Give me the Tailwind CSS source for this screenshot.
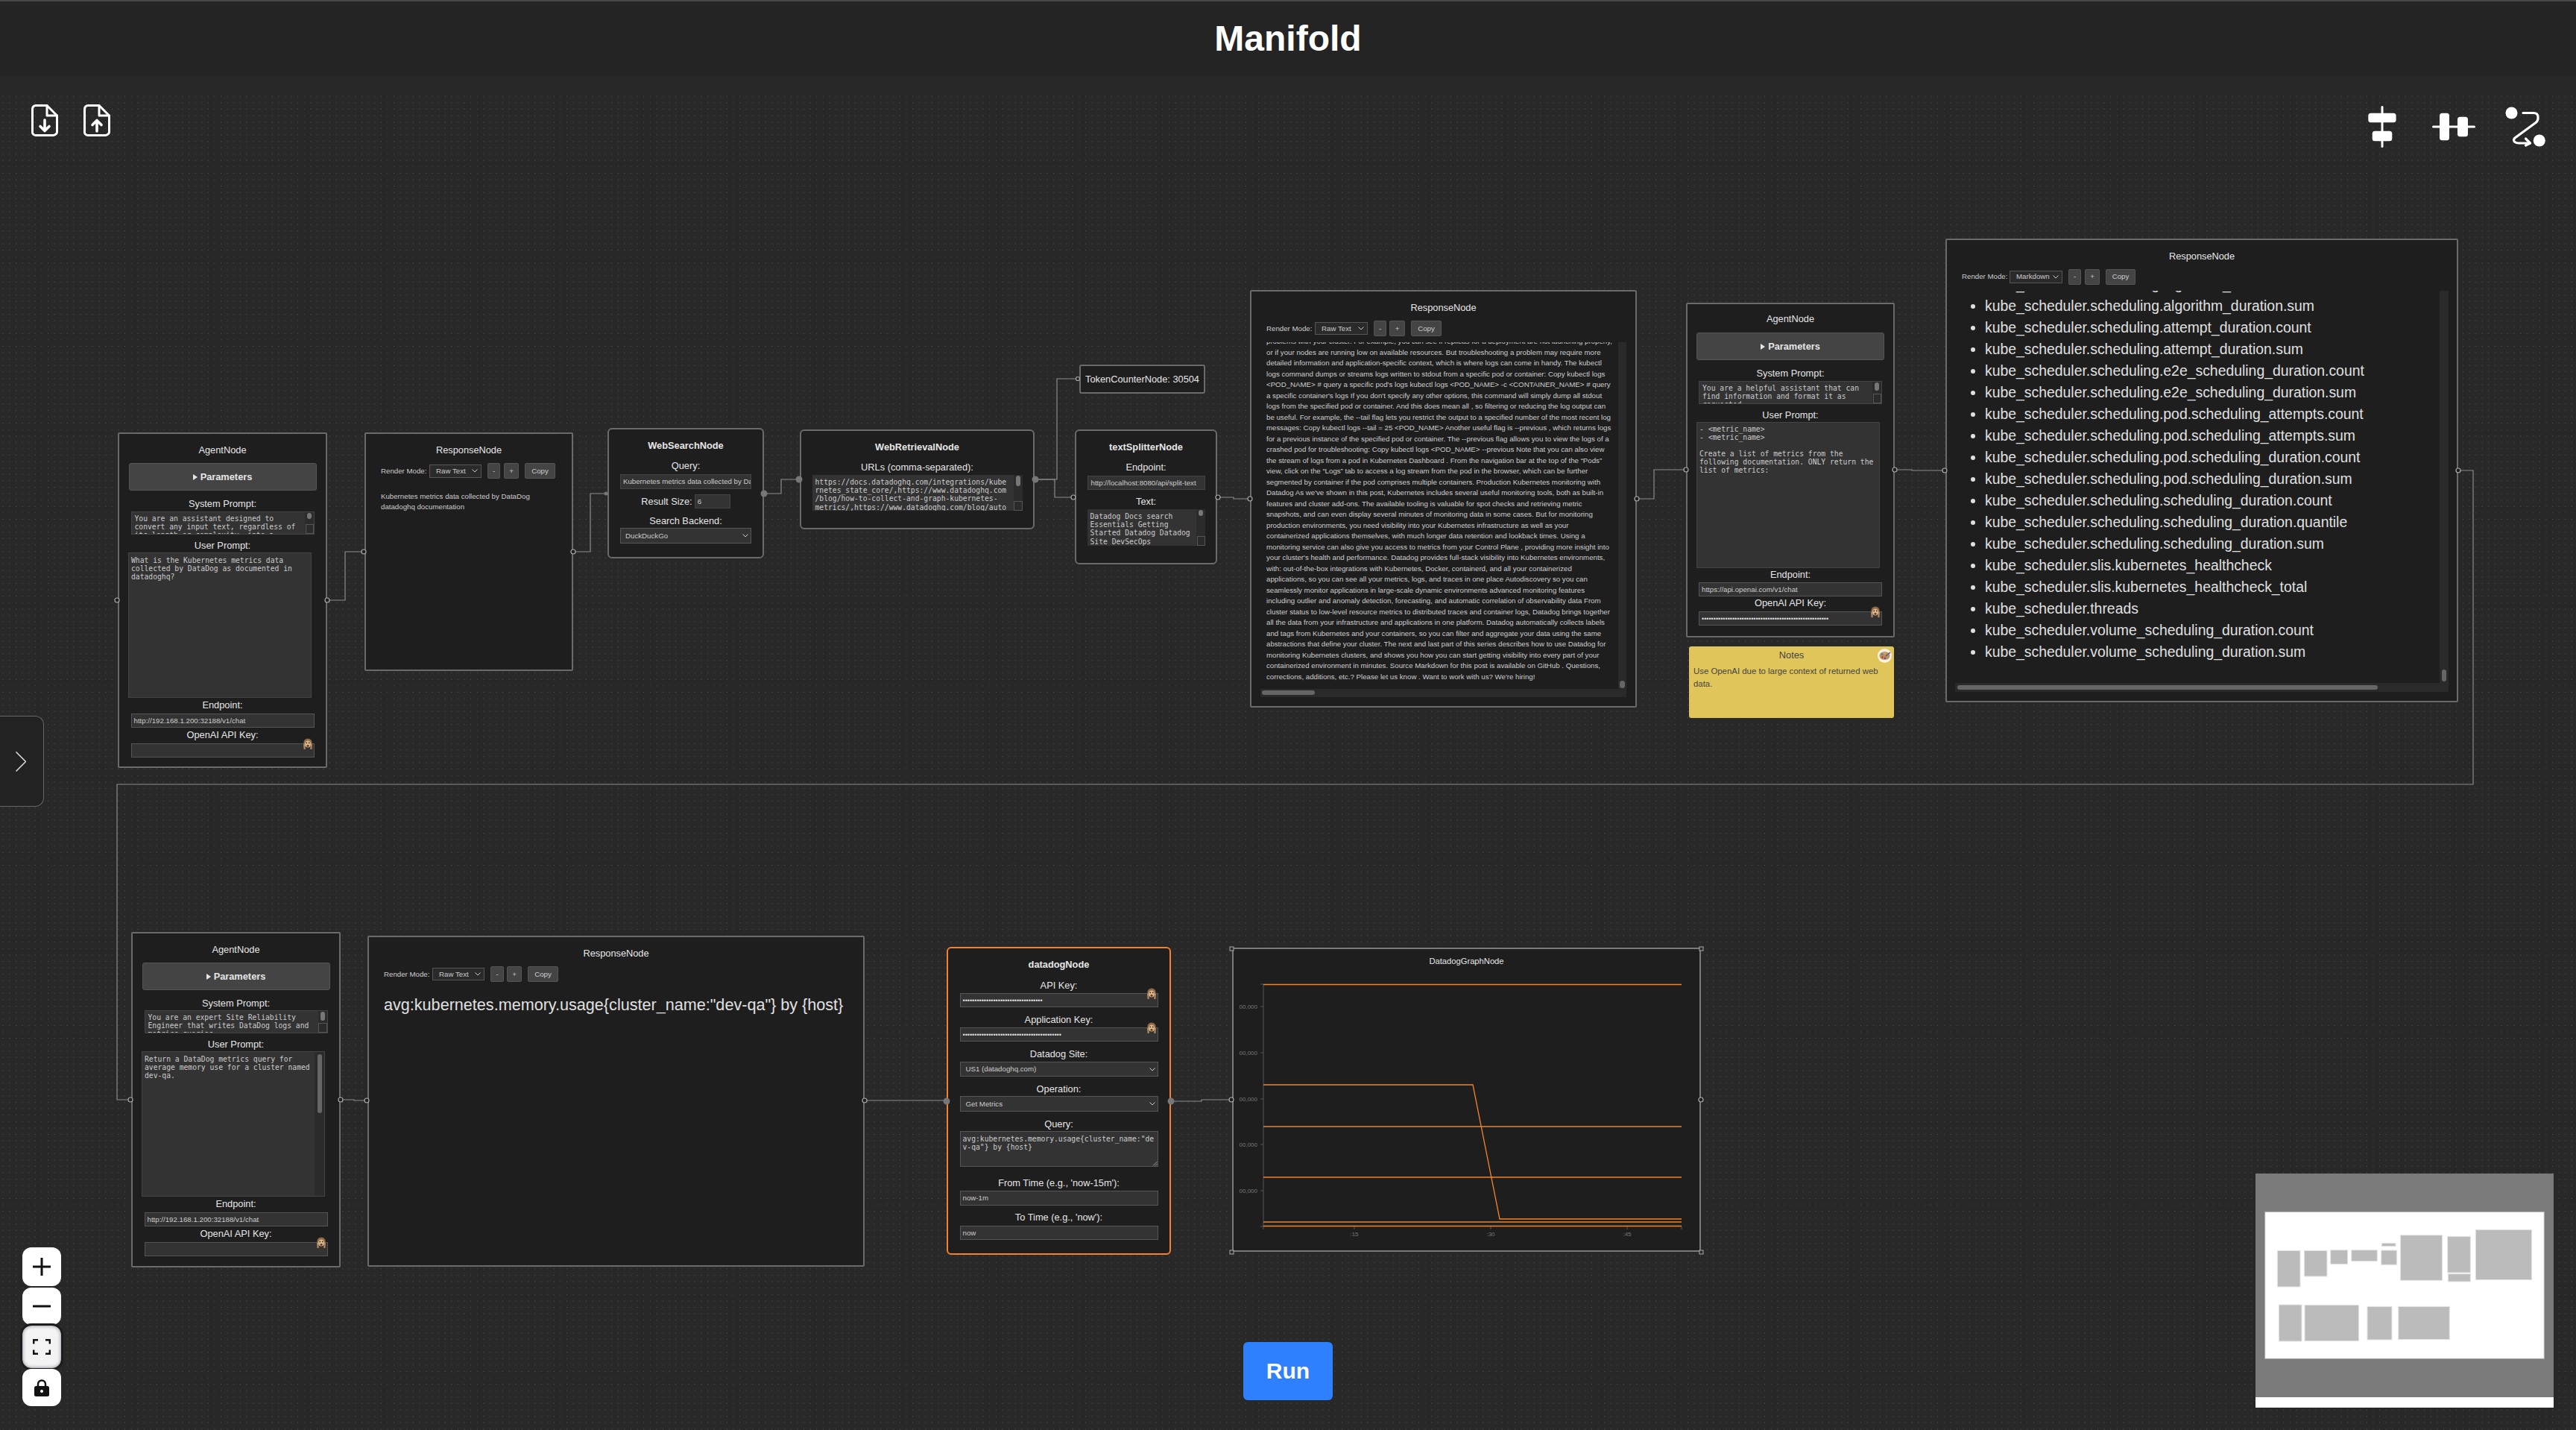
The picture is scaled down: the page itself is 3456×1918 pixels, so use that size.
<!DOCTYPE html>
<html lang="en">
<head>
  <meta charset="UTF-8" />
  <title>Manifold</title>
  <script src="https://cdn.jsdelivr.net/npm/@tailwindcss/browser@4"></script>
</head>
<body class="bg-[#282828] text-[#e6e6e6] font-['Liberation_Sans',Arial,sans-serif] text-[12.8px] leading-[16px]">
<svg class="hidden">
  <symbol id="monkey" viewBox="0 0 14 15">
    <circle cx="7" cy="6" r="5.6" fill="#8f6b48"/>
    <ellipse cx="7" cy="8" rx="4.2" ry="4.6" fill="#dcb78c"/>
    <circle cx="5.2" cy="6.4" r=".8" fill="#2a1c12"/>
    <circle cx="8.8" cy="6.4" r=".8" fill="#2a1c12"/>
    <ellipse cx="7" cy="10.4" rx="1.6" ry="1.3" fill="#5a3b28"/>
    <path d="M1 7.5 L3.2 8 L3.8 15 L1.6 15 Z M13 7.5 L10.8 8 L10.2 15 L12.4 15 Z" fill="#b5895f"/>
  </symbol>
  <symbol id="caret" viewBox="0 0 6 8"><path d="M0 0L6 4L0 8Z" fill="#e6e6e6"/></symbol>
</svg>

<div class="relative w-[3456px] h-[1918px] overflow-hidden">
  <header class="h-[102px] bg-[#242424] border-t-2 border-[#484848] flex items-center justify-center">
    <h1 class="text-[48px] leading-none font-bold text-white">Manifold</h1>
  </header>

  <!-- dotted canvas -->
  <div class="absolute left-0 right-0 top-[125px] bottom-0 bg-[radial-gradient(circle,#5a5a5a_0.6px,transparent_0.8px)] bg-[length:8.6px_8.6px]"></div>

  <!-- top left file icons -->
  <div class="absolute left-[42px] top-[140px] flex gap-[34px]">
    <svg class="w-[36px] h-[43px]" viewBox="0 0 36 43" fill="none" stroke="#fff" stroke-width="3" stroke-linejoin="round" stroke-linecap="round">
      <path d="M6 1.5H21L34.5 15V36A5 5 0 0 1 29.5 41.5H6A4.5 4.5 0 0 1 1.5 36V6A4.5 4.5 0 0 1 6 1.5Z"/><path d="M21 1.5V15H34.5"/>
      <path d="M18 21V35M12 29.5L18 35.5L24 29.5" stroke-width="3.6"/>
    </svg>
    <svg class="w-[36px] h-[43px]" viewBox="0 0 36 43" fill="none" stroke="#fff" stroke-width="3" stroke-linejoin="round" stroke-linecap="round">
      <path d="M6 1.5H21L34.5 15V36A5 5 0 0 1 29.5 41.5H6A4.5 4.5 0 0 1 1.5 36V6A4.5 4.5 0 0 1 6 1.5Z"/><path d="M21 1.5V15H34.5"/>
      <path d="M18 36V22M12 27.5L18 21.5L24 27.5" stroke-width="3.6"/>
    </svg>
  </div>

  <!-- top right layout icons -->
  <div class="absolute left-[3176px] top-[140px] flex items-center gap-[47px]">
    <svg class="w-[40px] h-[60px]" viewBox="0 0 40 60" fill="#fff">
      <rect x="18.5" y="2" width="3" height="56" rx="1.5"/><rect x="1.3" y="11.7" width="37.3" height="12.5" rx="3.5"/><rect x="6.7" y="35.7" width="26.6" height="13.5" rx="3.5"/>
    </svg>
    <svg class="w-[58px] h-[40px]" viewBox="0 0 58 40" fill="#fff">
      <rect x="0" y="18.5" width="58" height="3" rx="1.5"/><rect x="10" y="1.7" width="13" height="36.5" rx="3.5"/><rect x="34" y="6.7" width="14" height="26.5" rx="3.5"/>
    </svg>
    <svg class="-ml-[7px] w-[56px] h-[56px]" viewBox="0 0 56 56" fill="none" stroke="#fff" stroke-width="3.2" stroke-linecap="round" stroke-linejoin="round">
      <circle cx="8.5" cy="9.5" r="8" fill="#fff" stroke="none"/><circle cx="45.8" cy="46.5" r="8" fill="#fff" stroke="none"/>
      <path d="M24 9.5H38Q44 9.5 44 15V17Q44 20 41 22.5L13 43Q10 46 13 48.500Q15 50 18 50H33"/><path d="M27.5 44L33.5 50L27.5 53"/>
    </svg>
  </div>

  <!-- AgentNode 1 -->
  <div class="absolute left-[158px] top-[580px] w-[281px] h-[450px] bg-[#1e1e1e] border-2 border-[#6a6a6a] rounded-[2px] pt-[14px] flex flex-col items-center">
    <div class="h-[16px]">AgentNode</div>
    <div class="mt-[9px] w-[252px] h-[37px] bg-[#444] border border-[#555] rounded-[3px] flex items-center justify-center font-bold gap-[4px]"><svg class="w-[6px] h-[8px]"><use href="#caret"/></svg>Parameters</div>
    <div class="mt-[10px] h-[16px]">System Prompt:</div>
    <div class="relative mt-[2px] w-[246px] h-[31px] bg-[#333] border border-[#444] overflow-hidden px-[4px] pt-[3px] font-['DejaVu_Sans_Mono',monospace] text-[9.7px] leading-[11px] text-[#ccc] whitespace-pre">You are an assistant designed to
convert any input text, regardless of
its length or complexity, into a<span class="absolute right-0 top-0 bottom-0 w-[12px] bg-[#2b2b2b]"></span><span class="absolute right-[3px] top-[1px] w-[6px] h-[8px] rounded-full bg-[#777]"></span><span class="absolute right-0 bottom-0 w-[11px] h-[13px] border border-[#555] bg-[#2b2b2b]"></span></div>
    <div class="mt-[7px] h-[16px]">User Prompt:</div>
    <div class="self-start ml-[12px] mt-[1px] w-[246px] h-[195px] bg-[#333] border border-[#444] px-[3px] pt-[4px] font-['DejaVu_Sans_Mono',monospace] text-[9.7px] leading-[11px] text-[#ccc] whitespace-pre">What is the Kubernetes metrics data
collected by DataDog as documented in
datadoghq?</div>
    <div class="mt-[2px] h-[16px]">Endpoint:</div>
    <div class="mt-[3px] w-[246px] h-[19px] bg-[#333] border border-[#555] px-[3px] flex items-center text-[9.7px] text-[#ccc]">http://192.168.1.200:32188/v1/chat</div>
    <div class="mt-[2px] h-[16px]">OpenAI API Key:</div>
    <div class="relative mt-[3px] w-[246px] h-[19px] bg-[#333] border border-[#555]"><svg class="absolute right-[1px] top-[-8px] w-[14px] h-[15px]"><use href="#monkey"/></svg></div>
  </div>

  <!-- ResponseNode 1 -->
  <div class="absolute left-[489px] top-[580px] w-[280px] h-[320px] bg-[#1e1e1e] border-2 border-[#6a6a6a] rounded-[2px] pt-[14px] flex flex-col">
    <div class="h-[16px] text-center">ResponseNode</div>
    <div class="mt-[9px] pl-[20px] h-[21px] flex items-center text-[9.7px] text-[#ccc]">
      <span class="w-[65px]">Render Mode:</span>
      <span class="w-[70px] h-[18px] bg-[#2a2a2a] border border-[#555] pl-[8px] pr-[4px] flex items-center justify-between">Raw Text<svg class="w-[8px] h-[5px]" viewBox="0 0 8 5" fill="none" stroke="#ccc"><path d="M.5 .5L4 4L7.5 .5"/></svg></span>
      <span class="ml-[8px] w-[17px] h-[21px] bg-[#444] border border-[#555] rounded-[2px] flex items-center justify-center">-</span>
      <span class="ml-[5px] w-[20px] h-[21px] bg-[#444] border border-[#555] rounded-[2px] flex items-center justify-center">+</span>
      <span class="ml-[8px] w-[41px] h-[21px] bg-[#444] border border-[#555] rounded-[2px] flex items-center justify-center">Copy</span>
    </div>
    <div class="mt-[17px] pl-[20px] text-[9.7px] leading-[14px] text-[#ccc] whitespace-pre">Kubernetes metrics data collected by DataDog
datadoghq documentation</div>
  </div>

  <!-- WebSearchNode -->
  <div class="absolute left-[815px] top-[574px] w-[210px] h-[175px] bg-[#1e1e1e] border-2 border-[#6a6a6a] rounded-[6px] pt-[14px] flex flex-col items-center">
    <div class="h-[16px] font-bold">WebSearchNode</div>
    <div class="mt-[11px] h-[16px]">Query:</div>
    <div class="mt-[3px] w-[176px] h-[20px] bg-[#333] border border-[#444] px-[3px] flex items-center text-[9.7px] text-[#ccc] overflow-hidden whitespace-nowrap">Kubernetes metrics data collected by DataDog</div>
    <div class="mt-[7px] flex items-center h-[19px]"><span>Result Size:</span><span class="ml-[3px] w-[48px] h-[19px] bg-[#333] border border-[#444] px-[3px] flex items-center text-[9.7px] text-[#ccc]">6</span></div>
    <div class="mt-[9px] h-[16px]">Search Backend:</div>
    <div class="mt-[1px] w-[176px] h-[21px] bg-[#333] border border-[#555] pl-[6px] pr-[3px] flex items-center justify-between text-[9.7px] text-[#ccc]">DuckDuckGo<svg class="w-[8px] h-[5px]" viewBox="0 0 8 5" fill="none" stroke="#ccc"><path d="M.5 .5L4 4L7.5 .5"/></svg></div>
  </div>

  <!-- WebRetrievalNode -->
  <div class="absolute left-[1073px] top-[576px] w-[315px] h-[134px] bg-[#1e1e1e] border-2 border-[#6a6a6a] rounded-[6px] pt-[14px] flex flex-col items-center">
    <div class="h-[16px] font-bold">WebRetrievalNode</div>
    <div class="mt-[11px] h-[16px]">URLs (comma-separated):</div>
    <div class="relative mt-[2px] w-[282px] h-[48px] bg-[#333] overflow-hidden pl-[4px] pt-[4px] font-['DejaVu_Sans_Mono',monospace] text-[9.7px] leading-[11.2px] text-[#ccc] whitespace-pre">https://docs.datadoghq.com/integrations/kube
rnetes_state_core/,https://www.datadoghq.com
/blog/how-to-collect-and-graph-kubernetes-
metrics/,https://www.datadoghq.com/blog/auto<span class="absolute right-0 top-0 bottom-0 w-[12px] bg-[#2b2b2b]"></span><span class="absolute right-[3px] top-[1px] w-[6px] h-[14px] rounded-full bg-[#777]"></span><span class="absolute right-0 bottom-0 w-[12px] h-[13px] border border-[#555] bg-[#2b2b2b]"></span></div>
  </div>

  <!-- TokenCounterNode -->
  <div class="absolute left-[1448px] top-[489px] w-[169px] h-[39px] bg-[#1e1e1e] border-2 border-[#6a6a6a] rounded-[3px] flex items-center justify-center">TokenCounterNode: 30504</div>

  <!-- textSplitterNode -->
  <div class="absolute left-[1442px] top-[576px] w-[191px] h-[181px] bg-[#1e1e1e] border-2 border-[#6a6a6a] rounded-[6px] pt-[14px] flex flex-col items-center">
    <div class="h-[16px] font-bold">textSplitterNode</div>
    <div class="mt-[11px] h-[16px]">Endpoint:</div>
    <div class="mt-[3px] w-[158px] h-[19px] bg-[#333] border border-[#444] px-[4px] flex items-center text-[9.7px] text-[#ccc] overflow-hidden whitespace-nowrap">http://localhost:8080/api/split-text</div>
    <div class="mt-[8px] h-[16px]">Text:</div>
    <div class="relative mt-[2px] w-[158px] h-[49px] bg-[#333] overflow-hidden pl-[4px] pt-[4px] font-['DejaVu_Sans_Mono',monospace] text-[9.7px] leading-[11.2px] text-[#ccc] whitespace-pre">Datadog Docs search
Essentials Getting
Started Datadog Datadog
Site DevSecOps<span class="absolute right-0 top-0 bottom-0 w-[12px] bg-[#2b2b2b]"></span><span class="absolute right-[3px] top-[1px] w-[6px] h-[8px] rounded-full bg-[#777]"></span><span class="absolute right-0 bottom-0 w-[11px] h-[13px] border border-[#555] bg-[#2b2b2b]"></span></div>
  </div>

  <!-- ResponseNode 2 -->
  <div class="absolute left-[1677px] top-[389px] w-[519px] h-[560px] bg-[#1e1e1e] border-2 border-[#6a6a6a] rounded-[2px] pt-[13.5px] px-[12px] flex flex-col">
    <div class="h-[16px] text-center">ResponseNode</div>
    <div class="mt-[9.5px] pl-[8px] h-[21px] flex items-center text-[9.7px] text-[#ccc]">
      <span class="w-[65px]">Render Mode:</span>
      <span class="w-[71px] h-[17px] bg-[#2a2a2a] border border-[#555] pl-[8px] pr-[4px] flex items-center justify-between">Raw Text<svg class="w-[8px] h-[5px]" viewBox="0 0 8 5" fill="none" stroke="#ccc"><path d="M.5 .5L4 4L7.5 .5"/></svg></span>
      <span class="ml-[8px] w-[17px] h-[21px] bg-[#444] border border-[#555] rounded-[2px] flex items-center justify-center">-</span>
      <span class="ml-[4px] w-[21px] h-[21px] bg-[#444] border border-[#555] rounded-[2px] flex items-center justify-center">+</span>
      <span class="ml-[8px] w-[41px] h-[21px] bg-[#444] border border-[#555] rounded-[2px] flex items-center justify-center">Copy</span>
    </div>
    <div class="relative mt-[8px] h-[476px] overflow-hidden">
      <div class="-mt-[8px] pl-[8px] text-[9.7px] leading-[14.5px] text-[#ccc] whitespace-pre">problems with your cluster. For example, you can see if replicas for a deployment are not launching properly,
or if your nodes are running low on available resources. But troubleshooting a problem may require more
detailed information and application-specific context, which is where logs can come in handy. The kubectl
logs command dumps or streams logs written to stdout from a specific pod or container: Copy kubectl logs
&lt;POD_NAME&gt; # query a specific pod's logs kubectl logs &lt;POD_NAME&gt; -c &lt;CONTAINER_NAME&gt; # query
a specific container's logs If you don't specify any other options, this command will simply dump all stdout
logs from the specified pod or container. And this does mean all , so filtering or reducing the log output can
be useful. For example, the --tail flag lets you restrict the output to a specified number of the most recent log
messages: Copy kubectl logs --tail = 25 &lt;POD_NAME&gt; Another useful flag is --previous , which returns logs
for a previous instance of the specified pod or container. The --previous flag allows you to view the logs of a
crashed pod for troubleshooting: Copy kubectl logs &lt;POD_NAME&gt; --previous Note that you can also view
the stream of logs from a pod in Kubernetes Dashboard . From the navigation bar at the top of the “Pods”
view, click on the “Logs” tab to access a log stream from the pod in the browser, which can be further
segmented by container if the pod comprises multiple containers. Production Kubernetes monitoring with
Datadog As we've shown in this post, Kubernetes includes several useful monitoring tools, both as built-in
features and cluster add-ons. The available tooling is valuable for spot checks and retrieving metric
snapshots, and can even display several minutes of monitoring data in some cases. But for monitoring
production environments, you need visibility into your Kubernetes infrastructure as well as your
containerized applications themselves, with much longer data retention and lookback times. Using a
monitoring service can also give you access to metrics from your Control Plane , providing more insight into
your cluster's health and performance. Datadog provides full-stack visibility into Kubernetes environments,
with: out-of-the-box integrations with Kubernetes, Docker, containerd, and all your containerized
applications, so you can see all your metrics, logs, and traces in one place Autodiscovery so you can
seamlessly monitor applications in large-scale dynamic environments advanced monitoring features
including outlier and anomaly detection, forecasting, and automatic correlation of observability data From
cluster status to low-level resource metrics to distributed traces and container logs, Datadog brings together
all the data from your infrastructure and applications in one platform. Datadog automatically collects labels
and tags from Kubernetes and your containers, so you can filter and aggregate your data using the same
abstractions that define your cluster. The next and last part of this series describes how to use Datadog for
monitoring Kubernetes clusters, and shows you how you can start getting visibility into every part of your
containerized environment in minutes. Source Markdown for this post is available on GitHub . Questions,
corrections, additions, etc.? Please let us know . Want to work with us? We're hiring!</div>
      <div class="absolute right-0 top-0 bottom-[11px] w-[11px] bg-[#2a2a2a]"><div class="absolute left-[2px] bottom-[1px] w-[7px] h-[10px] rounded-full bg-[#666]"></div></div>
      <div class="absolute left-0 right-0 bottom-0 h-[11px] bg-[#2a2a2a]"><div class="absolute left-[2px] top-[2px] w-[71px] h-[6px] rounded-full bg-[#666]"></div></div>
    </div>
  </div>

  <!-- AgentNode 2 -->
  <div class="absolute left-[2262px] top-[406px] w-[280px] h-[449px] bg-[#1e1e1e] border-2 border-[#6a6a6a] rounded-[2px] pt-[12px] flex flex-col items-center">
    <div class="h-[16px]">AgentNode</div>
    <div class="mt-[10px] w-[252px] h-[37px] bg-[#444] border border-[#555] rounded-[3px] flex items-center justify-center font-bold gap-[4px]"><svg class="w-[6px] h-[8px]"><use href="#caret"/></svg>Parameters</div>
    <div class="mt-[10px] h-[16px]">System Prompt:</div>
    <div class="relative mt-[2px] w-[246px] h-[31px] bg-[#333] border border-[#444] overflow-hidden px-[4px] pt-[3px] font-['DejaVu_Sans_Mono',monospace] text-[9.7px] leading-[11px] text-[#ccc] whitespace-pre">You are a helpful assistant that can
find information and format it as
requested<span class="absolute right-0 top-0 bottom-0 w-[12px] bg-[#2b2b2b]"></span><span class="absolute right-[3px] top-[1px] w-[6px] h-[11px] rounded-full bg-[#777]"></span><span class="absolute right-0 bottom-0 w-[11px] h-[13px] border border-[#555] bg-[#2b2b2b]"></span></div>
    <div class="mt-[7px] h-[16px]">User Prompt:</div>
    <div class="self-start ml-[12px] mt-[1px] w-[246px] h-[196px] bg-[#333] border border-[#444] px-[3px] pt-[3px] font-['DejaVu_Sans_Mono',monospace] text-[9.7px] leading-[11px] text-[#ccc] whitespace-pre">- &lt;metric_name&gt;
- &lt;metric_name&gt;

Create a list of metrics from the
following documentation. ONLY return the
list of metrics:</div>
    <div class="mt-[1px] h-[16px]">Endpoint:</div>
    <div class="mt-[2px] w-[246px] h-[19px] bg-[#333] border border-[#555] px-[3px] flex items-center text-[9.7px] text-[#ccc]">https://api.openai.com/v1/chat</div>
    <div class="mt-[1px] h-[16px]">OpenAI API Key:</div>
    <div class="relative mt-[3px] w-[246px] h-[19px] bg-[#333] border border-[#555] px-[3px] flex items-center text-[9px] text-[#ddd] whitespace-nowrap">••••••••••••••••••••••••••••••••••••••••••••••••••••••<svg class="absolute right-[1px] top-[-8px] w-[14px] h-[15px]"><use href="#monkey"/></svg></div>
  </div>

  <!-- Notes -->
  <div class="absolute left-[2266px] top-[867px] w-[275px] h-[96px] bg-[#e0c55a] rounded-[3px] text-[#444]">
    <div class="pt-[4px] h-[20px] text-center">Notes</div>
    <p class="mt-[5px] px-[6px] text-[11.4px] leading-[17px]">Use OpenAI due to large context of returned web data.</p>
    <div class="absolute right-[3px] top-[3px] w-[19px] h-[19px] rounded-full bg-[#f6f1e0] flex items-center justify-center">
      <svg class="w-[16px] h-[13px]" viewBox="0 0 16 13">
        <ellipse cx="7.5" cy="6.5" rx="7" ry="5.5" fill="#b9935f"/>
        <circle cx="4" cy="4.5" r="1.3" fill="#4a7bc8"/><circle cx="7.5" cy="3.2" r="1.3" fill="#d9b23a"/><circle cx="4.5" cy="8.5" r="1.3" fill="#c0392b"/><circle cx="8" cy="9.7" r="1.3" fill="#7e3fa6"/>
        <path d="M9 7L15 2" stroke="#6a4a9c" stroke-width="1.6"/>
      </svg>
    </div>
  </div>

  <!-- ResponseNode 3 -->
  <div class="absolute left-[2610px] top-[320px] w-[688px] h-[622px] bg-[#1e1e1e] border-2 border-[#6a6a6a] rounded-[2px] pt-[13.6px] px-[11px] flex flex-col">
    <div class="h-[16px] text-center">ResponseNode</div>
    <div class="mt-[9.4px] pl-[9px] h-[21px] flex items-center text-[9.7px] text-[#ccc]">
      <span class="w-[64px]">Render Mode:</span>
      <span class="w-[71px] h-[17px] bg-[#2a2a2a] border border-[#555] pl-[8px] pr-[4px] flex items-center justify-between">Markdown<svg class="w-[8px] h-[5px]" viewBox="0 0 8 5" fill="none" stroke="#ccc"><path d="M.5 .5L4 4L7.5 .5"/></svg></span>
      <span class="ml-[8px] w-[17px] h-[21px] bg-[#444] border border-[#555] rounded-[2px] flex items-center justify-center">-</span>
      <span class="ml-[5px] w-[20px] h-[21px] bg-[#444] border border-[#555] rounded-[2px] flex items-center justify-center">+</span>
      <span class="ml-[8px] w-[40px] h-[21px] bg-[#444] border border-[#555] rounded-[2px] flex items-center justify-center">Copy</span>
    </div>
    <div class="relative mt-[8px] h-[538px] overflow-hidden">
      <ul class="-mt-[22.5px] list-disc pl-[40px] text-[19.4px] leading-[29px] text-[#e0e0e0] whitespace-nowrap">
        <li>kube_scheduler.scheduling.algorithm_duration.count</li>
        <li>kube_scheduler.scheduling.algorithm_duration.sum</li>
        <li>kube_scheduler.scheduling.attempt_duration.count</li>
        <li>kube_scheduler.scheduling.attempt_duration.sum</li>
        <li>kube_scheduler.scheduling.e2e_scheduling_duration.count</li>
        <li>kube_scheduler.scheduling.e2e_scheduling_duration.sum</li>
        <li>kube_scheduler.scheduling.pod.scheduling_attempts.count</li>
        <li>kube_scheduler.scheduling.pod.scheduling_attempts.sum</li>
        <li>kube_scheduler.scheduling.pod.scheduling_duration.count</li>
        <li>kube_scheduler.scheduling.pod.scheduling_duration.sum</li>
        <li>kube_scheduler.scheduling.scheduling_duration.count</li>
        <li>kube_scheduler.scheduling.scheduling_duration.quantile</li>
        <li>kube_scheduler.scheduling.scheduling_duration.sum</li>
        <li>kube_scheduler.slis.kubernetes_healthcheck</li>
        <li>kube_scheduler.slis.kubernetes_healthcheck_total</li>
        <li>kube_scheduler.threads</li>
        <li>kube_scheduler.volume_scheduling_duration.count</li>
        <li>kube_scheduler.volume_scheduling_duration.sum</li>
      </ul>
      <div class="absolute right-0 top-0 bottom-[12px] w-[12px] bg-[#2a2a2a]"><div class="absolute left-[3px] bottom-[2px] w-[6px] h-[16px] rounded-full bg-[#666]"></div></div>
      <div class="absolute left-0 right-0 bottom-0 h-[12px] bg-[#2a2a2a]"><div class="absolute left-[3px] top-[3px] w-[564px] h-[6px] rounded-full bg-[#666]"></div></div>
    </div>
  </div>

  <!-- AgentNode 3 -->
  <div class="absolute left-[176px] top-[1250px] w-[281px] h-[450px] bg-[#1e1e1e] border-2 border-[#6a6a6a] rounded-[2px] pt-[14px] flex flex-col items-center">
    <div class="h-[16px]">AgentNode</div>
    <div class="mt-[9px] w-[252px] h-[37px] bg-[#444] border border-[#555] rounded-[3px] flex items-center justify-center font-bold gap-[4px]"><svg class="w-[6px] h-[8px]"><use href="#caret"/></svg>Parameters</div>
    <div class="mt-[10px] h-[16px]">System Prompt:</div>
    <div class="relative mt-[1px] w-[246px] h-[31px] bg-[#333] border border-[#444] overflow-hidden px-[4px] pt-[3px] font-['DejaVu_Sans_Mono',monospace] text-[9.7px] leading-[11px] text-[#ccc] whitespace-pre">You are an expert Site Reliability
Engineer that writes DataDog logs and
metrics queries<span class="absolute right-0 top-0 bottom-0 w-[12px] bg-[#2b2b2b]"></span><span class="absolute right-[3px] top-[1px] w-[6px] h-[12px] rounded-full bg-[#777]"></span><span class="absolute right-0 bottom-0 w-[12px] h-[13px] border border-[#555] bg-[#2b2b2b]"></span></div>
    <div class="mt-[7px] h-[16px]">User Prompt:</div>
    <div class="relative self-start ml-[12px] mt-[1px] w-[246px] h-[195px] bg-[#333] border border-[#444] px-[3px] pt-[4px] font-['DejaVu_Sans_Mono',monospace] text-[9.7px] leading-[11px] text-[#ccc] whitespace-pre">Return a DataDog metrics query for
average memory use for a cluster named
dev-qa.<span class="absolute right-0 top-0 bottom-0 w-[13px] bg-[#2b2b2b]"></span><span class="absolute right-[3px] top-[3px] w-[6px] h-[79px] rounded-full bg-[#666]"></span></div>
    <div class="mt-[2px] h-[16px]">Endpoint:</div>
    <div class="mt-[3px] w-[246px] h-[19px] bg-[#333] border border-[#555] px-[3px] flex items-center text-[9.7px] text-[#ccc]">http://192.168.1.200:32188/v1/chat</div>
    <div class="mt-[2px] h-[16px]">OpenAI API Key:</div>
    <div class="relative mt-[3px] w-[246px] h-[19px] bg-[#333] border border-[#555]"><svg class="absolute right-[1px] top-[-8px] w-[14px] h-[15px]"><use href="#monkey"/></svg></div>
  </div>

  <!-- ResponseNode 4 -->
  <div class="absolute left-[493px] top-[1255px] w-[667px] h-[444px] bg-[#1e1e1e] border-2 border-[#6a6a6a] rounded-[2px] pt-[14px] flex flex-col">
    <div class="h-[16px] text-center">ResponseNode</div>
    <div class="mt-[9px] pl-[20px] h-[21px] flex items-center text-[9.7px] text-[#ccc]">
      <span class="w-[65px]">Render Mode:</span>
      <span class="w-[70px] h-[17px] bg-[#2a2a2a] border border-[#555] pl-[8px] pr-[4px] flex items-center justify-between">Raw Text<svg class="w-[8px] h-[5px]" viewBox="0 0 8 5" fill="none" stroke="#ccc"><path d="M.5 .5L4 4L7.5 .5"/></svg></span>
      <span class="ml-[8px] w-[18px] h-[21px] bg-[#444] border border-[#555] rounded-[2px] flex items-center justify-center">-</span>
      <span class="ml-[4px] w-[20px] h-[21px] bg-[#444] border border-[#555] rounded-[2px] flex items-center justify-center">+</span>
      <span class="ml-[8px] w-[41px] h-[21px] bg-[#444] border border-[#555] rounded-[2px] flex items-center justify-center">Copy</span>
    </div>
    <div class="mt-[16px] pl-[20px] text-[21.6px] leading-[29px] text-[#e0e0e0] whitespace-nowrap">avg:kubernetes.memory.usage{cluster_name:"dev-qa"} by {host}</div>
  </div>

  <!-- datadogNode -->
  <div class="absolute left-[1270px] top-[1270px] w-[301px] h-[413px] bg-[#1e1e1e] border-2 border-[#f5822a] rounded-[6px] pt-[14px] flex flex-col items-center">
    <div class="h-[16px] font-bold">datadogNode</div>
    <div class="mt-[12px] h-[16px]">API Key:</div>
    <div class="relative mt-[2px] w-[266px] h-[19px] bg-[#333] border border-[#555] px-[3px] flex items-center text-[9px] text-[#ddd] whitespace-nowrap">••••••••••••••••••••••••••••••••••<svg class="absolute right-[1px] top-[-8px] w-[14px] h-[15px]"><use href="#monkey"/></svg></div>
    <div class="mt-[9px] h-[16px]">Application Key:</div>
    <div class="relative mt-[2px] w-[266px] h-[19px] bg-[#333] border border-[#555] px-[3px] flex items-center text-[9px] text-[#ddd] whitespace-nowrap">••••••••••••••••••••••••••••••••••••••••••<svg class="absolute right-[1px] top-[-8px] w-[14px] h-[15px]"><use href="#monkey"/></svg></div>
    <div class="mt-[9px] h-[16px]">Datadog Site:</div>
    <div class="mt-[2px] w-[266px] h-[20px] bg-[#333] border border-[#555] pl-[7px] pr-[3px] flex items-center justify-between text-[9.7px] text-[#ccc]">US1 (datadoghq.com)<svg class="w-[8px] h-[5px]" viewBox="0 0 8 5" fill="none" stroke="#ccc"><path d="M.5 .5L4 4L7.5 .5"/></svg></div>
    <div class="mt-[9px] h-[16px]">Operation:</div>
    <div class="mt-[1px] w-[266px] h-[21px] bg-[#333] border border-[#555] pl-[7px] pr-[3px] flex items-center justify-between text-[9.7px] text-[#ccc]">Get Metrics<svg class="w-[8px] h-[5px]" viewBox="0 0 8 5" fill="none" stroke="#ccc"><path d="M.5 .5L4 4L7.5 .5"/></svg></div>
    <div class="mt-[9px] h-[16px]">Query:</div>
    <div class="relative mt-[1px] w-[266px] h-[48px] bg-[#333] border border-[#555] px-[3px] pt-[4px] font-['DejaVu_Sans_Mono',monospace] text-[9.7px] leading-[11px] text-[#ccc] whitespace-pre">avg:kubernetes.memory.usage{cluster_name:"de
v-qa"} by {host}<svg class="absolute right-0 bottom-0 w-[7px] h-[7px]" viewBox="0 0 7 7" stroke="#999"><path d="M1 6.5L6.5 1M4 6.5L6.5 4"/></svg></div>
    <div class="mt-[14px] h-[16px]">From Time (e.g., 'now-15m'):</div>
    <div class="mt-[2px] w-[266px] h-[20px] bg-[#333] border border-[#555] px-[3px] flex items-center text-[9.7px] text-[#ccc]">now-1m</div>
    <div class="mt-[8px] h-[16px]">To Time (e.g., 'now'):</div>
    <div class="mt-[3px] w-[266px] h-[19px] bg-[#333] border border-[#555] px-[3px] flex items-center text-[9.7px] text-[#ccc]">now</div>
  </div>

  <!-- DatadogGraphNode -->
  <div class="absolute left-[1653px] top-[1271px] w-[629px] h-[408px] bg-[#1e1e1e] border-2 border-[#7a7a7a] pt-[8px]">
    <div class="h-[16px] text-center text-[11.2px]">DatadogGraphNode</div>
    <svg class="block mt-[8px] w-[625px] h-[365px]" viewBox="1655 1305 625 365" fill="none">
      <path d="M1695 1320V1645M1691 1320H1695M1691 1350H1695M1691 1412H1695M1691 1474H1695M1691 1535H1695M1691 1597H1695M1691 1645H1695M1695 1645V1649M1817 1645V1649M2000 1645V1649M2183 1645V1649M2256 1645V1649" stroke="#555"/>
      <g fill="#777" font-size="8" text-anchor="end" stroke="none" font-family="Liberation Sans">
        <text x="1687" y="1353">00,000</text><text x="1687" y="1415">00,000</text><text x="1687" y="1477">00,000</text><text x="1687" y="1538">00,000</text><text x="1687" y="1600">00,000</text>
      </g>
      <g fill="#777" font-size="8" text-anchor="middle" stroke="none" font-family="Liberation Sans">
        <text x="1817" y="1658">:15</text><text x="2000" y="1658">:30</text><text x="2183" y="1658">:45</text>
      </g>
      <g stroke="#f5822a" stroke-width="1.3">
        <path d="M1695 1320.5H2256"/>
        <path d="M1695 1455H1976L2012 1635H2256"/>
        <path d="M1695 1511H2256"/>
        <path d="M1695 1579H2256"/>
        <path d="M1695 1639H2256"/>
        <path d="M1695 1644.5H2256"/>
      </g>
    </svg>
  </div>

  <!-- edges and handles, on top of the nodes -->
  <svg class="absolute inset-0 w-[3456px] h-[1918px] pointer-events-none" viewBox="0 0 3456 1918" fill="none">
    <g stroke="#8c8c8c" stroke-width="1.2">
      <path d="M439 805H463V740H489"/>
      <path d="M769 740H792V662H815"/>
      <path d="M1025 662H1048V643H1073"/>
      <path d="M1388 643H1415V667H1440"/>
      <path d="M1388 643H1418V508H1446"/>
      <path d="M1633 667H1655V669H1677"/>
      <path d="M2196 669H2219V630H2262"/>
      <path d="M2542 630H2565V631H2609"/>
      <path d="M3298 631H3318V1052H157V1475H176"/>
      <path d="M457 1475H475V1476H492"/>
      <path d="M1160 1476H1270"/>
      <path d="M1571 1477H1612V1475H1652"/>
    </g>
    <g fill="#1e1e1e" stroke="#aaa" stroke-width="1.2">
      <circle cx="157" cy="805" r="3"/><circle cx="439" cy="805" r="3"/>
      <circle cx="488" cy="740" r="3"/><circle cx="769" cy="740" r="3"/>
      <circle cx="1440" cy="667" r="3"/><circle cx="1634" cy="667" r="3"/>
      <circle cx="1446" cy="508" r="2.5"/>
      <circle cx="1677" cy="669" r="3"/><circle cx="2196" cy="669" r="3"/>
      <circle cx="2262" cy="630" r="3"/><circle cx="2542" cy="630" r="3"/>
      <circle cx="2609" cy="631" r="3"/><circle cx="3298" cy="631" r="3"/>
      <circle cx="175" cy="1475" r="3"/><circle cx="457" cy="1475" r="3"/>
      <circle cx="492" cy="1476" r="3"/><circle cx="1160" cy="1476" r="3"/>
      <circle cx="1652" cy="1475" r="3"/><circle cx="2282" cy="1475" r="3"/>
    </g>
    <g fill="#777">
      <circle cx="813" cy="662" r="2.5"/><circle cx="1025" cy="662" r="4.5"/>
      <circle cx="1072" cy="643" r="4.5"/><circle cx="1389" cy="643" r="4.5"/>
      <circle cx="1270" cy="1477" r="4.5"/><circle cx="1571" cy="1477" r="4.5"/>
    </g>
    <g fill="#2a2a2a" stroke="#aaa">
      <rect x="1650" y="1270" width="5" height="5"/><rect x="2280" y="1270" width="5" height="5"/>
      <rect x="1650" y="1677" width="5" height="5"/><rect x="2280" y="1677" width="5" height="5"/>
    </g>
  </svg>

  <!-- sidebar toggle -->
  <div class="absolute left-0 top-[960px] w-[59px] h-[122px] bg-[#222] border border-l-0 border-[#666] rounded-r-[12px] flex items-center pl-[21px]">
    <svg class="w-[14px] h-[27px]" viewBox="0 0 14 27" fill="none" stroke="#ddd" stroke-width="1.5"><path d="M.5 .5L13.5 13.5L.5 26.5"/></svg>
  </div>

  <!-- zoom controls -->
  <div class="absolute left-[30px] top-[1673px] w-[52px] flex flex-col items-center">
    <div class="w-[52px] h-[52px] bg-white rounded-[12px] flex items-center justify-center">
      <svg class="w-[24px] h-[24px]" viewBox="0 0 24 24" stroke="#111" stroke-width="3"><path d="M12 0V24M0 12H24"/></svg>
    </div>
    <div class="mt-[2px] w-[52px] h-[50px] bg-white rounded-[12px] flex items-center justify-center">
      <svg class="w-[24px] h-[4px]" viewBox="0 0 24 4" stroke="#111" stroke-width="3"><path d="M0 2H24"/></svg>
    </div>
    <div class="mt-[1px] w-[52px] h-[57px] bg-[#f3f3f3] rounded-[12px] outline-3 outline-[#1c1c1c] shadow-[inset_0_0_5px_#77778a] flex items-center justify-center">
      <svg class="w-[24px] h-[21px]" viewBox="0 0 24 21" fill="none" stroke="#111" stroke-width="2.4"><path d="M7 1.2H1.2V6.5M17 1.2H22.8V6.5M7 19.8H1.2V14.5M17 19.8H22.8V14.5"/></svg>
    </div>
    <div class="mt-[1px] w-[52px] h-[50px] bg-white rounded-[12px] flex items-center justify-center">
      <svg class="w-[20px] h-[23px]" viewBox="0 0 20 23"><path d="M5 10V6.5A5 5 0 0 1 15 6.5V10" fill="none" stroke="#111" stroke-width="2.4"/><rect x="0" y="9" width="20" height="14" rx="2.5" fill="#111"/><circle cx="10" cy="16" r="2" fill="#fff"/></svg>
    </div>
  </div>

  <!-- run -->
  <div class="absolute left-[1668px] top-[1800px] w-[120px] h-[78px] bg-[#2f80ff] rounded-[6px] flex items-center justify-center text-white text-[30px] font-bold">Run</div>

  <!-- minimap -->
  <svg class="absolute left-[3026px] top-[1574px] w-[400px] h-[314px]" viewBox="78 42 1200 942">
    <rect x="78" y="42" width="1200" height="942" fill="#fff"/>
    <rect x="78" y="42" width="1200" height="900" fill="#7a7a7a"/>
    <rect x="116" y="196" width="1124" height="591" fill="#fff" stroke="#aaa" stroke-width="3"/>
    <g fill="#bbb" stroke="#e6e6e6" stroke-width="3">
      <rect x="166" y="352" width="92" height="146"/><rect x="274" y="352" width="92" height="104"/>
      <rect x="380" y="350" width="69" height="57"/><rect x="464" y="350" width="104" height="45"/>
      <rect x="586" y="322" width="56" height="13"/><rect x="584" y="351" width="63" height="58"/>
      <rect x="661" y="290" width="169" height="182"/><rect x="851" y="295" width="92" height="146"/>
      <rect x="853" y="446" width="90" height="31"/><rect x="964" y="268" width="226" height="202"/>
      <rect x="172" y="570" width="92" height="147"/><rect x="276" y="571" width="218" height="145"/>
      <rect x="528" y="577" width="99" height="134"/><rect x="653" y="577" width="206" height="133"/>
    </g>
  </svg>
</div>
</body>
</html>
